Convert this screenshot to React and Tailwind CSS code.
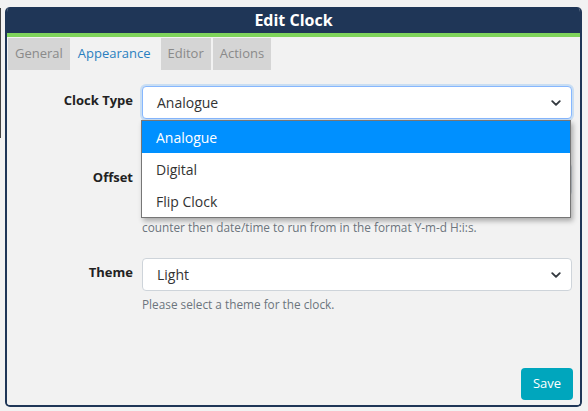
import React from "react";

const Chevron = () => (
  <svg width="10" height="10" viewBox="0 0 16 16" className="text-[#343a40]">
    <path d="M2 5l6 6 6-6" fill="none" stroke="currentColor" strokeWidth="3" strokeLinecap="round" strokeLinejoin="round" />
  </svg>
);

const SelectBox = ({ value, focused }) => (
  <div
    className={
      focused
        ? "flex h-[33px] w-[430px] items-center justify-between rounded-[4px] border border-[#86b7fe] bg-white pl-[14px] pr-[10px] text-[14px] text-[#333] shadow-[0_0_0_2px_#c9def3]"
        : "flex h-[33px] w-[430px] items-center justify-between rounded-[4px] border border-[#ced4da] bg-white pl-[14px] pr-[10px] text-[14px] text-[#333]"
    }
  >
    <span>{value}</span>
    <Chevron />
  </div>
);

const Field = ({ label, children, help }) => (
  <div className="mb-[22px] flex">
    <div className="w-[125px] pt-[5px] text-right text-[13px] font-bold text-[#222]">{label}</div>
    <div className="ml-[9px] flex flex-col">
      {children}
      <div className="mt-[4px] text-[11.8px] leading-[18px] text-[#6c757d]">{help}</div>
    </div>
  </div>
);

const App = () => {
  const tabs = ["General", "Appearance", "Editor", "Actions"];
  return (
    <div className="flex h-[411px] w-[588px] bg-[#f2f2f2] font-['Open_Sans',sans-serif]">
      <div className="mt-[8px] h-[130px] w-px bg-[#444]" />
      <div className="ml-[4px] mt-[7px] flex h-[400px] w-[577px] flex-col overflow-hidden rounded-[5px] border-2 border-t-0 border-[#1f3657]">
        {/* Header */}
        <div className="flex h-[26px] items-center justify-center bg-[#1f3657] text-[16px] font-bold text-white">
          Edit Clock
        </div>
        <div className="h-[4px] bg-[#7fd45b]" />

        <div className="relative flex flex-1 flex-col bg-[#f2f2f2] px-px pt-px">
          {/* Tabs */}
          <div className="flex h-[32px] gap-[2px] text-[13px]">
            {tabs.map((t) =>
              t === "Appearance" ? (
                <div key={t} className="-ml-[2px] flex items-center px-[8px] text-[#2a7fc0]">
                  {t}
                </div>
              ) : (
                <div key={t} className="flex items-center bg-[#d5d5d5] px-[7px] text-[#8a8a8a]">
                  {t}
                </div>
              )
            )}
          </div>

          <div className="mt-[16px]">
            <Field label="Clock Type" help={<span className="block h-[18px]" />}>
              <SelectBox value="Analogue" focused />
            </Field>
            <Field
              label="Offset"
              help={
                <>
                  <span className="block h-[18px]" />
                  <span className="block">counter then date/time to run from in the format Y-m-d H:i:s.</span>
                </>
              }
            >
              <div className="h-[33px] w-[430px] rounded-[4px] border border-[#ced4da] bg-white" />
            </Field>
            <Field label="Theme" help="Please select a theme for the clock.">
              <SelectBox value="Light" />
            </Field>
          </div>

          <div className="mt-auto mb-[5px] flex justify-end pr-[6px]">
            <button className="h-[32px] w-[52px] rounded-[4px] bg-[#00a6bd] text-[13px] text-white">Save</button>
          </div>

          {/* Open dropdown list */}
          <div className="absolute left-[134px] top-[83px] w-[430px] border border-[#767676] bg-white text-[14px] text-[#333] shadow-[2px_3px_5px_rgba(0,0,0,0.3)]">
            <div className="flex h-[32px] items-center bg-[#0090ff] pl-[14px] text-white">Analogue</div>
            <div className="flex h-[32px] items-center pl-[14px]">Digital</div>
            <div className="flex h-[32px] items-center pl-[14px]">Flip Clock</div>
          </div>
        </div>
      </div>
    </div>
  );
};

export default App;
